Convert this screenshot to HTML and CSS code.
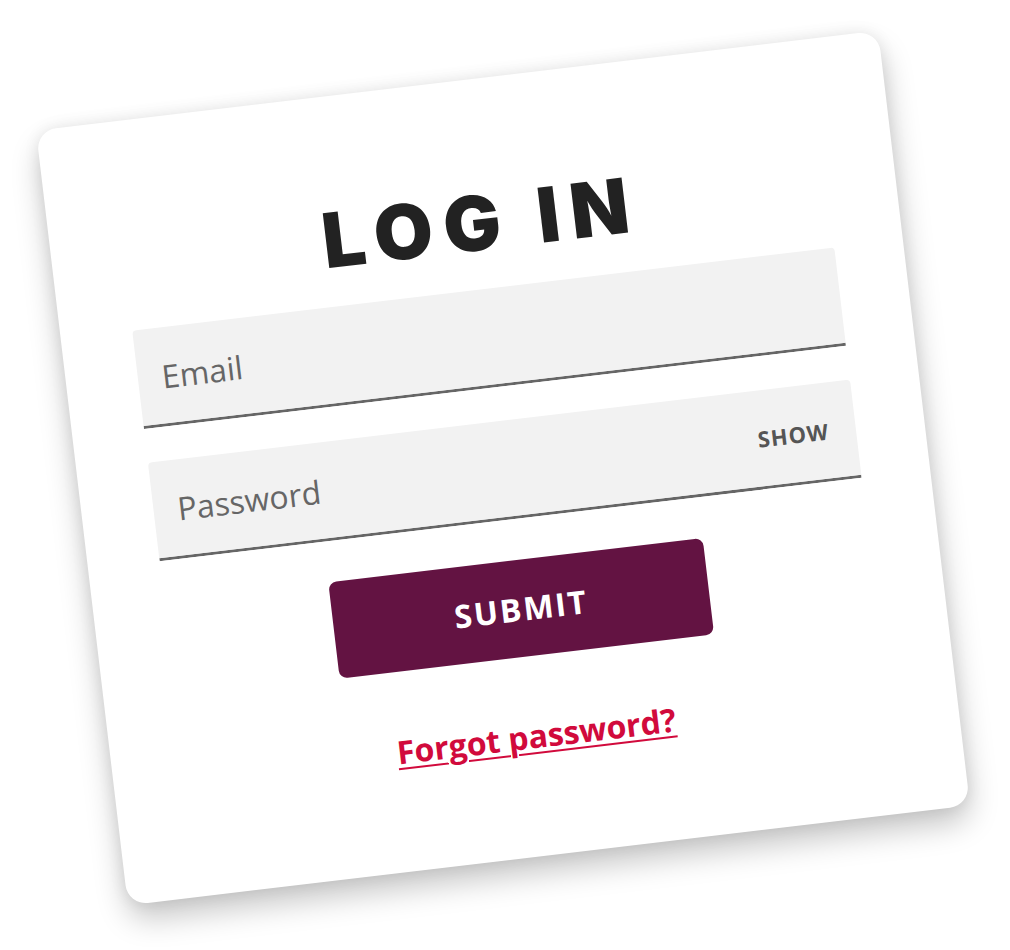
FILE: index.html
```html
<!DOCTYPE html>
<html lang="en">
<head>
    <meta charset="UTF-8">
    <meta name="viewport" content="width=device-width, initial-scale=1.0">
    <title>Log in</title>
    <link rel="stylesheet" href="styles.css">
</head>
<body>

    <form class="login-card" id="loginForm">
        <h1 class="login-title">LOG IN</h1>

        <div class="field">
            <input type="email" id="email" placeholder="Email">
        </div>

        <div class="field">
            <input type="password" id="password" placeholder="Password">
            <span class="show-toggle">SHOW</span>
        </div>

        <button type="submit" class="submit-btn">SUBMIT</button>

        <a href="#" class="forgot-link">Forgot password?</a>
    </form>

</body>
</html>
```
FILE: styles.css
```css
/* Reset */
* {
    margin: 0;
    padding: 0;
    box-sizing: border-box;
}

body {
    height: 950px;
    display: flex;
    align-items: center;
    justify-content: center;
    padding: 0 4px 15px 0;
    background-color: #fff;
    font-family: 'Open Sans', 'Liberation Sans', sans-serif;
    color: #222;
}

/* Card */
.login-card {
    width: 848px;
    height: 780px;
    padding: 105px 69px 0 72px;
    background-color: #fff;
    border-radius: 20px;
    box-shadow: 0 16px 30px rgba(0, 0, 0, 0.22), 0 0 16px rgba(0, 0, 0, 0.08);
    transform: rotate(-6.77deg);
    display: flex;
    flex-direction: column;
    align-items: center;
}

.login-title {
    font-family: 'Inter', 'Liberation Sans', sans-serif;
    font-weight: 900;
    font-size: 76px;
    line-height: 1;
    letter-spacing: 11px;
    margin-right: -11px;
    color: #222;
    margin-bottom: 29px;
}

/* Campos */
.field {
    width: 100%;
    height: 99px;
    display: flex;
    align-items: center;
    padding: 0 27px 0 24px;
    background-color: #f2f2f2;
    border-bottom: 3px solid #666;
    border-radius: 4px 4px 0 0;
    margin-bottom: 34px;
}

.field:last-of-type {
    margin-bottom: 41px;
}

.field input {
    flex: 1;
    min-width: 0;
    border: none;
    outline: none;
    background: transparent;
    font-family: 'Open Sans', sans-serif;
    font-size: 32px;
    color: #444;
}

.field input::placeholder {
    color: #666;
}

.show-toggle {
    font-size: 22px;
    font-weight: 700;
    letter-spacing: 1px;
    color: #555;
}

/* Botao */
.submit-btn {
    width: 377px;
    height: 97px;
    border: none;
    border-radius: 8px;
    background-color: #631342;
    color: #fff;
    font-family: 'Open Sans', sans-serif;
    font-size: 32px;
    font-weight: 700;
    letter-spacing: 2px;
    cursor: pointer;
    margin-bottom: 58px;
}

.forgot-link {
    font-size: 32px;
    font-weight: 700;
    color: #d10a3c;
    text-decoration: underline;
    text-decoration-thickness: 2px;
    text-underline-offset: 4px;
}
```
